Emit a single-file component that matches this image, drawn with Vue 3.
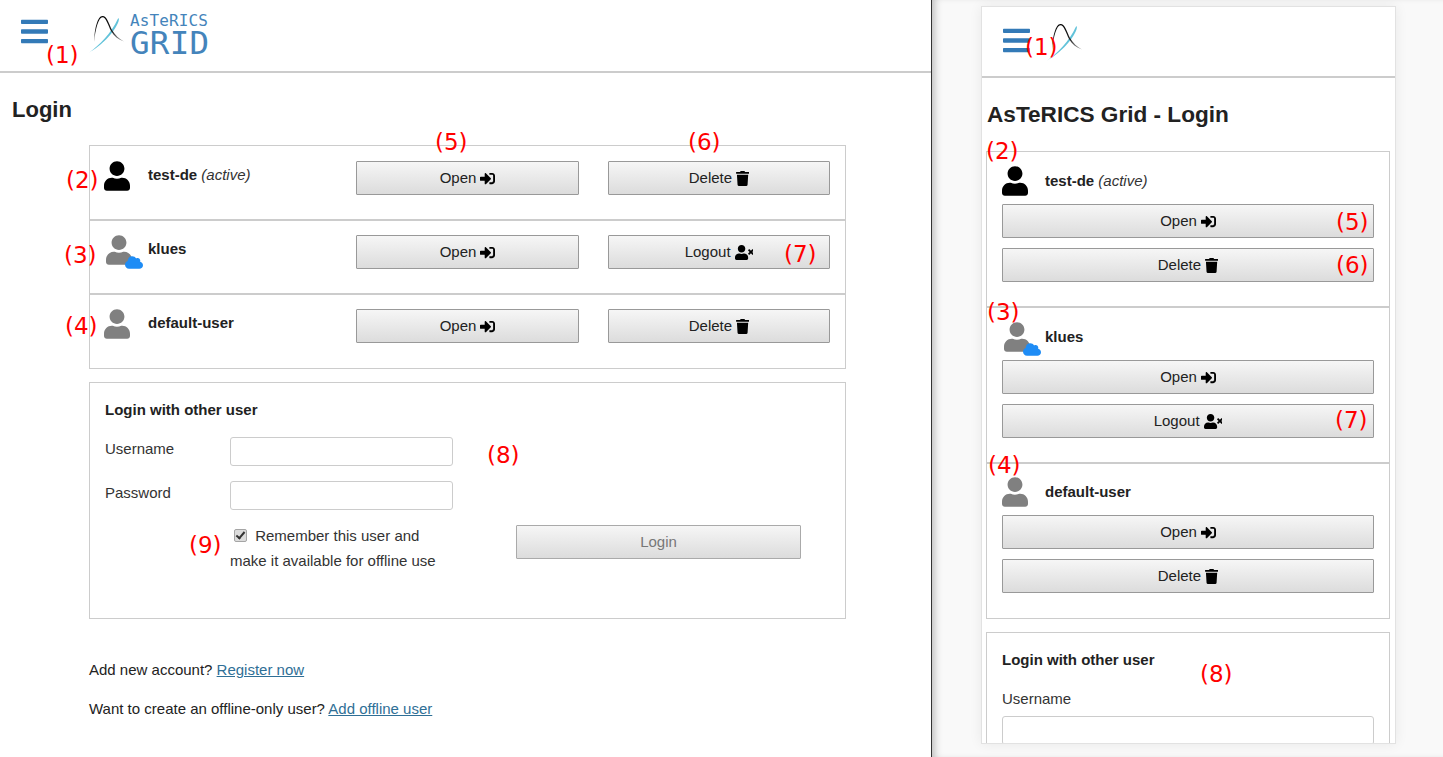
<template>
  <div class="page">
    <div v-for="pane in panes" :key="pane.key" class="pane" :class="'pane--' + pane.key">
      <div class="screen">
        <header class="topbar">
          <svg class="burger" viewBox="0 0 448 512"><path :d="icons.bars" /></svg>
          <div class="logo">
            <svg class="logo__mark" viewBox="0 0 37 40">
              <defs>
                <linearGradient :id="'ink-' + pane.key" x1="0" y1="0" x2="0" y2="1">
                  <stop offset="0" stop-color="#000" />
                  <stop offset="0.6" stop-color="#222" />
                  <stop offset="1" stop-color="#aaa" />
                </linearGradient>
              </defs>
              <path d="M1 38.5C12 33 27 18 30.5 7.500 31.5 4 30.5 3.500 29.500 5.500 24 18 11 32 1 38.500Z" fill="#62c3da" />
              <path d="M6 28C6.500 15 9.500 2 14.500 2 19 2 21 10 24 16 27 21 31 25 36 27.500 30 25.500 26 22 23 17 20 11 18 3.200 14.500 3.200 10.500 3.200 7.500 15 6 28Z" :fill="'url(#ink-' + pane.key + ')'" />
            </svg>
            <div v-if="pane.key === 'wide'" class="logo__text">
              <span class="logo__small">AsTeRICS</span>
              <span class="logo__big">GRID</span>
            </div>
          </div>
        </header>

        <h1 class="title">{{ pane.title }}</h1>

        <div class="content">
          <div class="users">
            <div v-for="user in users" :key="user.name" class="user">
              <div class="user__who">
                <div class="user__icon" :class="'user__icon--' + user.kind">
                  <svg viewBox="0 0 448 512"><path :d="icons.user" /></svg>
                  <svg v-if="user.kind === 'cloud'" class="user__cloud" viewBox="0 0 640 512"><path :d="icons.cloud" /></svg>
                </div>
                <div class="user__name">
                  <b>{{ user.name }}</b>
                  <i v-if="user.active"> (active)</i>
                </div>
              </div>
              <button class="btn">
                Open <svg class="btn__icon" viewBox="0 0 512 512"><path :d="icons.signIn" /></svg>
              </button>
              <button v-if="user.kind === 'cloud'" class="btn">
                Logout <svg class="btn__icon" viewBox="0 0 640 512"><path :d="icons.userTimes" /></svg>
              </button>
              <button v-else class="btn">
                Delete <svg class="btn__icon" viewBox="0 0 448 512"><path :d="icons.trash" /></svg>
              </button>
            </div>
          </div>

          <form class="login" @submit.prevent>
            <div class="login__title">Login with other user</div>
            <div class="field">
              <label class="field__label">Username</label>
              <input class="field__input" type="text" />
            </div>
            <!-- the narrow frame ends inside the username input, the rest is only shown on the wide pane -->
            <template v-if="pane.key === 'wide'">
              <div class="field">
                <label class="field__label">Password</label>
                <input class="field__input" type="password" />
              </div>
              <div class="login__foot">
                <label class="remember">
                  <input class="remember__box" type="checkbox" checked />
                  Remember this user and make it available for offline use
                </label>
                <button class="btn btn--login" disabled>Login</button>
              </div>
            </template>
          </form>

          <template v-if="pane.key === 'wide'">
            <p class="note note--first">Add new account? <a href="#">Register now</a></p>
            <p class="note">Want to create an offline-only user? <a href="#">Add offline user</a></p>
          </template>
        </div>
      </div>
    </div>

    <span
      v-for="mark in marks"
      :key="mark.left + '-' + mark.top"
      class="mark"
      :style="{ left: mark.left + 'px', top: mark.top + 'px' }"
      >({{ mark.n }})</span
    >
  </div>
</template>

<script setup>
const panes = [
  { key: "wide", title: "Login" },
  { key: "narrow", title: "AsTeRICS Grid - Login" },
];

const users = [
  { name: "test-de", kind: "active", active: true },
  { name: "klues", kind: "cloud" },
  { name: "default-user", kind: "local" },
];

const marks = [
  { n: 1, left: 46, top: 42 },
  { n: 2, left: 66, top: 167 },
  { n: 3, left: 64, top: 242 },
  { n: 4, left: 65, top: 313 },
  { n: 5, left: 435, top: 129 },
  { n: 6, left: 688, top: 129 },
  { n: 7, left: 784, top: 241 },
  { n: 8, left: 487, top: 442 },
  { n: 9, left: 189, top: 532 },
  { n: 1, left: 1025, top: 34 },
  { n: 2, left: 986, top: 138 },
  { n: 5, left: 1336, top: 209 },
  { n: 6, left: 1336, top: 252 },
  { n: 3, left: 987, top: 299 },
  { n: 7, left: 1335, top: 407 },
  { n: 4, left: 988, top: 452 },
  { n: 8, left: 1200, top: 661 },
];

const userPath =
  "M224 256c70.7 0 128-57.3 128-128S294.7 0 224 0 96 57.3 96 128s57.3 128 128 128zm89.6 32h-16.7c-22.2 10.2-46.9 16-72.9 16s-50.6-5.8-72.9-16h-16.7C60.2 288 0 348.2 0 422.4V464c0 26.5 21.5 48 48 48h352c26.5 0 48-21.5 48-48v-41.6c0-74.2-60.2-134.4-134.4-134.4z";

const icons = {
  user: userPath,
  bars: "M16 132h416c8.837 0 16-7.163 16-16V76c0-8.837-7.163-16-16-16H16C7.163 60 0 67.163 0 76v40c0 8.837 7.163 16 16 16zm0 160h416c8.837 0 16-7.163 16-16v-40c0-8.837-7.163-16-16-16H16c-8.837 0-16 7.163-16 16v40c0 8.837 7.163 16 16 16zm0 160h416c8.837 0 16-7.163 16-16v-40c0-8.837-7.163-16-16-16H16c-8.837 0-16 7.163-16 16v40c0 8.837 7.163 16 16 16z",
  signIn:
    "M416 448h-84c-6.6 0-12-5.4-12-12v-40c0-6.6 5.4-12 12-12h84c17.7 0 32-14.3 32-32V160c0-17.7-14.3-32-32-32h-84c-6.6 0-12-5.4-12-12V76c0-6.6 5.4-12 12-12h84c53 0 96 43 96 96v192c0 53-43 96-96 96zm-47-201L201 79c-15-15-41-4.5-41 17v96H24c-13.3 0-24 10.7-24 24v96c0 13.3 10.7 24 24 24h136v96c0 21.5 26 32 41 17l168-168c9.3-9.4 9.3-24.6 0-34z",
  trash:
    "M432 32H312l-9.4-18.7A24 24 0 0 0 281.1 0H166.8a23.72 23.72 0 0 0-21.4 13.3L136 32H16A16 16 0 0 0 0 48v32a16 16 0 0 0 16 16h416a16 16 0 0 0 16-16V48a16 16 0 0 0-16-16zM53.2 467a48 48 0 0 0 47.9 45h245.8a48 48 0 0 0 47.9-45L416 128H32z",
  userTimes:
    "M589.6 240l45.6-45.6c6.3-6.3 6.3-16.5 0-22.8l-22.8-22.8c-6.3-6.3-16.5-6.3-22.8 0L544 194.4l-45.6-45.6c-6.3-6.3-16.5-6.3-22.8 0l-22.8 22.8c-6.3 6.3-6.3 16.5 0 22.8l45.6 45.6-45.6 45.6c-6.3 6.3-6.3 16.5 0 22.8l22.8 22.8c6.3 6.3 16.5 6.3 22.8 0l45.6-45.6 45.6 45.6c6.3 6.3 16.5 6.3 22.8 0l22.8-22.8c6.3-6.3 6.3-16.5 0-22.8L589.6 240z" +
    userPath,
  cloud:
    "M537.6 226.6c4.1-10.7 6.4-22.4 6.4-34.6 0-53-43-96-96-96-19.7 0-38.1 6-53.3 16.2C367 64.2 315.3 32 256 32c-88.4 0-160 71.6-160 160 0 2.7.1 5.4.2 8.1C40.2 219.8 0 273.2 0 336c0 79.5 64.5 144 144 144h368c70.7 0 128-57.3 128-128 0-61.9-44-113.6-102.4-125.4z",
};
</script>

<style>
html,
body {
  margin: 0;
  background: #fff;
}
</style>

<style scoped>
.page {
  position: relative;
  display: flex;
  width: 1443px;
  height: 757px;
  overflow: hidden;
  font-family: "Liberation Sans", Arial, sans-serif;
  font-size: 15px;
  line-height: 20px;
  color: #222;
}

.pane--wide {
  flex: none;
  width: 931px;
  border-right: 1px solid #333;
}
.pane--narrow {
  flex: 1;
  padding: 6px 47px 13px 49px;
  background: #f9f9f9;
  box-shadow: inset 7px 0 8px -5px rgba(0, 0, 0, 0.28);
}
.pane--narrow .screen {
  height: 100%;
  box-sizing: border-box;
  overflow: hidden;
  background: #fff;
  border: 1px solid #e2e2e2;
  box-shadow: 0 0 12px rgba(0, 0, 0, 0.07);
}

/* top bar */
.topbar {
  display: flex;
  align-items: flex-start;
  box-sizing: border-box;
  height: 73px;
  padding: 16px 0 0 21px;
  border-bottom: 2px solid #ccc;
}
.pane--narrow .topbar {
  height: 71px;
  padding: 18px 0 0 21px;
}
.burger {
  width: 27px;
  height: 31px;
  fill: #337ab7;
}
.logo {
  display: flex;
  margin: -2px 0 0 40px;
}
.pane--narrow .logo {
  margin: -3px 0 0 16px;
}
.logo__mark {
  width: 37px;
  height: 40px;
}
.logo__text {
  display: flex;
  flex-direction: column;
  margin: -2px 0 0 5px;
  font-family: "DejaVu Sans Mono", monospace;
  color: #4484bb;
}
.logo__small {
  font-size: 16px;
  line-height: 18px;
  letter-spacing: 0.1px;
}
.logo__big {
  font-size: 32.5px;
  line-height: 26px;
  letter-spacing: 0.3px;
}

.title {
  margin: 0;
  padding: 23px 0 0 12px;
  font-size: 22px;
  line-height: 28px;
  font-weight: bold;
}
.pane--narrow .title {
  padding: 23px 0 0 5px;
  font-size: 22.6px;
}

.content {
  width: 757px;
  margin: 21px 0 0 89px;
}
.pane--narrow .content {
  width: 404px;
  margin: 22px 0 0 4px;
}

/* user list */
.users {
  box-sizing: border-box;
  padding: 1px 0;
  border: 1px solid #ccc;
}
.pane--narrow .users {
  padding: 0;
}
.user {
  display: grid;
  grid-template-columns: 223px 223px 222px;
  column-gap: 29px;
  align-content: start;
  align-items: start;
  box-sizing: border-box;
  height: 74px;
  padding: 14px 15px 0 14px;
  border-bottom: 2px solid #ccc;
}
.user:last-child {
  height: 72px;
  border-bottom: 0;
}
.pane--narrow .user {
  grid-template-columns: 1fr;
  row-gap: 10px;
  height: 156px;
  padding: 14px 15px 0;
}
.pane--narrow .user:last-child {
  height: 154px;
  padding-top: 13px;
}
.pane--narrow .user__who {
  margin-bottom: -2px;
}
.user__who {
  display: flex;
}
.user__icon {
  position: relative;
  flex: none;
  width: 26px;
  height: 30px;
  margin-right: 18px;
}
.pane--narrow .user__icon {
  margin-right: 17px;
}
.user__icon svg {
  display: block;
  width: 26px;
  height: 30px;
  fill: #808080;
}
.user__icon--active svg {
  fill: #000;
}
.user__icon--cloud svg {
  margin-left: 2px;
}
.user__icon .user__cloud {
  position: absolute;
  left: 21px;
  top: 20px;
  width: 18px;
  height: 15px;
  margin-left: 0;
  fill: #1e8cf5;
}
.user__name {
  padding-top: 4px;
}
.pane--narrow .user__name {
  padding-top: 5px;
}
.user__name i {
  color: #333;
}

/* buttons */
.btn {
  display: flex;
  align-items: center;
  justify-content: center;
  gap: 4px;
  box-sizing: border-box;
  height: 34px;
  padding: 0;
  font: inherit;
  color: #222;
  background: linear-gradient(#f6f6f6, #dcdcdc);
  border: 1px solid #999;
  border-radius: 1px;
}
.btn__icon {
  height: 15px;
  fill: #000;
}
.btn--login {
  flex: none;
  width: 285px;
  color: #777;
  border-color: #aaa;
}

/* other user form */
.login {
  box-sizing: border-box;
  height: 237px;
  margin-top: 13px;
  padding: 17px 15px 0;
  border: 1px solid #ccc;
}
.login__title {
  margin-bottom: 17px;
  font-weight: bold;
}
.pane--narrow .login__title {
  margin-bottom: 19px;
}
.field {
  display: flex;
  align-items: center;
  margin-bottom: 15px;
}
.field__label {
  flex: none;
  width: 125px;
  margin-top: -5px;
  color: #333;
}
.field__input {
  box-sizing: border-box;
  width: 223px;
  height: 29px;
  background: #fff;
  border: 1px solid #ccc;
  border-radius: 3px;
}
.pane--narrow .field {
  display: block;
}
.pane--narrow .field__label {
  display: block;
  width: auto;
  margin: 0 0 7px;
}
.pane--narrow .field__input {
  width: 100%;
}
.login__foot {
  display: flex;
  justify-content: space-between;
  padding: 0 29px 0 125px;
}
.remember {
  width: 222px;
  margin-top: -1px;
  line-height: 24.5px;
  color: #333;
}
.remember__box {
  position: relative;
  appearance: none;
  box-sizing: border-box;
  width: 13px;
  height: 13px;
  margin: 0 4px 0 4px;
  vertical-align: -1px;
  background: #dcdcdc;
  border: 1px solid #a5a5a5;
  border-radius: 2px;
}
.remember__box::after {
  content: "";
  position: absolute;
  left: 3px;
  top: 0;
  width: 3px;
  height: 7px;
  border: solid #333;
  border-width: 0 2px 2px 0;
  transform: rotate(40deg);
}

.note {
  margin: 19px 0 0;
}
.note--first {
  margin-top: 41px;
}
.note a {
  color: #2f6f96;
}

.mark {
  position: absolute;
  font-family: "DejaVu Sans", sans-serif;
  font-size: 23px;
  line-height: 26px;
  color: #f00;
}
</style>
